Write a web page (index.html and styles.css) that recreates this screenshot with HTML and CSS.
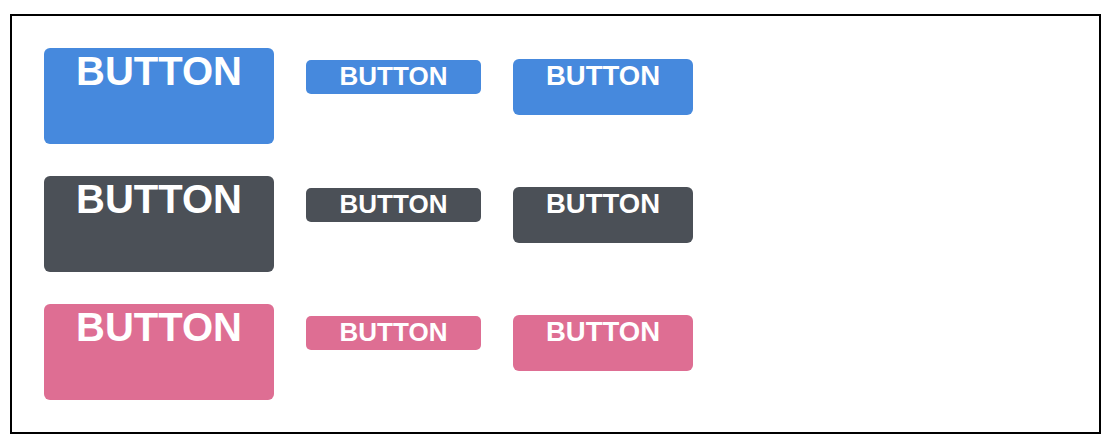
FILE: index.html
```html
<!DOCTYPE html>
<html>
<head>
<meta charset="utf-8">
<link rel="stylesheet" href="styles.css">
</head>
<body>
<div class="frame">
  <div class="row">
    <a class="btn btn-lg blue">BUTTON</a>
    <a class="btn btn-sm blue">BUTTON</a>
    <a class="btn btn-md blue">BUTTON</a>
  </div>
  <div class="row">
    <a class="btn btn-lg dark">BUTTON</a>
    <a class="btn btn-sm dark">BUTTON</a>
    <a class="btn btn-md dark">BUTTON</a>
  </div>
  <div class="row">
    <a class="btn btn-lg pink">BUTTON</a>
    <a class="btn btn-sm pink">BUTTON</a>
    <a class="btn btn-md pink">BUTTON</a>
  </div>
</div>
</body>
</html>
```
FILE: styles.css
```css
html, body {
  margin: 0;
  padding: 0;
  background: #ffffff;
}
body {
  font-family: "Liberation Sans", Arial, sans-serif;
}
.frame {
  box-sizing: border-box;
  width: 1091px;
  margin: 14px 0 0 10px;
  border: 2px solid #000;
  padding: 32px;
  display: flex;
  flex-direction: column;
  gap: 32px;
}
.row {
  display: flex;
  align-items: baseline;
  gap: 32px;
}
.btn {
  box-sizing: border-box;
  display: block;
  color: #ffffff;
  font-weight: bold;
  text-align: center;
  line-height: normal;
  border-radius: 6px;
  padding-top: 2px;
}
.btn-lg {
  width: 230px;
  height: 96px;
  font-size: 40px;
  padding-top: 1px;
}
.btn-sm {
  width: 175px;
  height: 34px;
  font-size: 26px;
  padding-top: 1px;
  border-radius: 5px;
}
.btn-md {
  width: 180px;
  height: 56px;
  font-size: 27.5px;
  padding-top: 1px;
}
.blue { background: #4689dd; }
.dark { background: #4b5057; }
.pink { background: #de6e93; }
```
